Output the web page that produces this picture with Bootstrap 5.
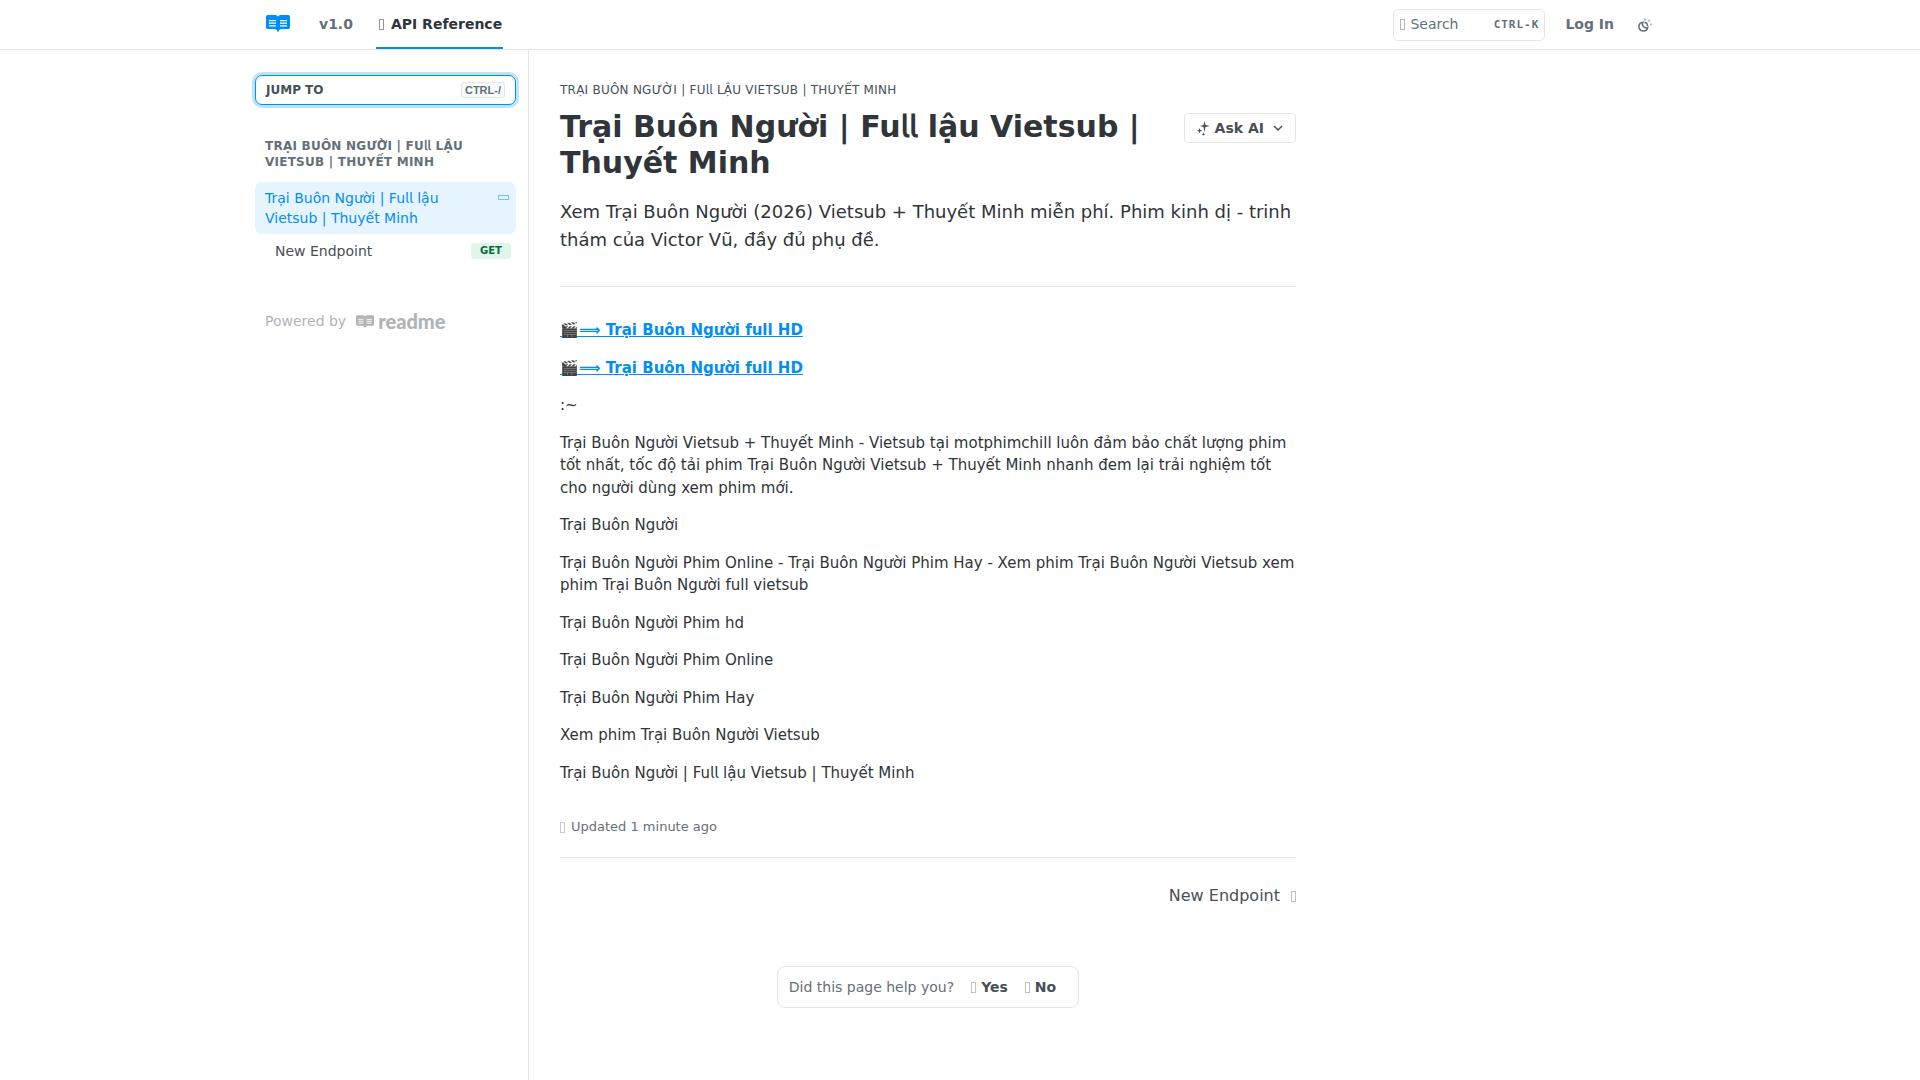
<!DOCTYPE html>
<html lang="vi">
<head>
<meta charset="utf-8">
<meta name="viewport" content="width=device-width, initial-scale=1">
<title>Trại Buôn Người | Fu𝗅𝗅 lậu Vietsub | Thuyết Minh</title>
<link href="https://cdn.jsdelivr.net/npm/bootstrap@5.3.0/dist/css/bootstrap.min.css" rel="stylesheet">
<style>
:root { --rm-blue:#018ef5; --rm-line:#e3e5e7; --rm-muted:#637079; --rm-dark:#465058; --rm-ink:#2f353a; }
body { font-family:"DejaVu Sans", "Noto Sans", sans-serif; font-size:15px; line-height:1.5; color:var(--rm-ink); background:#fff; }
a { text-decoration:none; color:inherit; }
.shell { width:100%; max-width:1410px; margin:0 auto; }
.tofu { display:inline-block; width:5px; height:11px; border:1px solid currentColor; opacity:.5; flex:none; }

.topbar { border-bottom:1px solid var(--rm-line); font-size:14px; }
.topbar .shell { height:49px; }
.brand { padding:0 29px 2px 11px; line-height:0; }
.toplink { font-weight:700; color:var(--rm-muted); }
.tab { gap:7px; margin-left:23px; padding:0 1px 0 3px; color:var(--rm-ink); position:relative; }
.tab::after { content:""; position:absolute; left:0; right:0; bottom:0; height:2px; background:var(--rm-blue); }
.search { width:152px; height:32px; padding:0 5px 0 6px; margin-right:20px; gap:5px; background:#fff; border:1px solid var(--rm-line); border-radius:5px; color:var(--rm-muted); }
.search kbd { padding:0; background:none; color:var(--rm-muted); font:700 11px "DejaVu Sans Mono", monospace; letter-spacing:1px; }
.theme { margin:0 12px 0 23px; padding:0; border:0; background:none; line-height:0; color:var(--rm-muted); }

.rail { width:274px; flex:none; border-right:1px solid var(--rm-line); padding:25px 12px 0 0; min-height:calc(100vh - 50px); }
.jump { width:100%; height:30px; padding:0 10px; background:#fff; border:1px solid var(--rm-blue); border-radius:7px; box-shadow:0 0 0 3px #c0e3fd; font-size:12px; font-weight:700; color:var(--rm-dark); }
.jump kbd { padding:0 3px; background:#f9fafb; border:1px solid var(--rm-line); border-radius:3px; font:700 11px/14px "Liberation Sans", sans-serif; color:var(--rm-muted); }
.group { margin:33px 0 12px; padding:0 10px; font-size:12px; line-height:16px; font-weight:700; letter-spacing:.02em; color:var(--rm-muted); text-transform:uppercase; }
.item { padding:6px 5px 6px 10px; font-size:14px; line-height:20px; color:var(--rm-dark); border-radius:7px; }
.item.on { background:#e6f4fe; color:var(--rm-blue); }
.item.on .tofu { width:11px; height:5px; margin:7px 2px 0 16px; }
.item.sub { padding-left:20px; margin-top:1px; }
.verb { width:40px; line-height:16px; font-size:10px; font-weight:700; text-align:center; background:#dff6e9; color:#046c3c; border-radius:4px; }
.powered { margin-top:44px; padding-left:10px; gap:10px; font-size:14px; line-height:20px; color:#adb4ba; }
.wordmark { font:900 20px/20px Lato, sans-serif; }

.doc { width:767px; padding:28px 0 0 31px; }
.crumb { font-size:12px; line-height:24px; letter-spacing:.02em; color:var(--rm-dark); text-transform:uppercase; }
.doc h1 { margin:7px 0 0; font-size:30px; line-height:36px; font-weight:700; }
.ask { height:30px; margin-top:11px; padding:0 12px; gap:5px; background:#fff; border:1px solid var(--rm-line); border-radius:4px; font-size:14px; font-weight:700; color:var(--rm-dark); }
.intro { margin:17px 0 32px; font-size:18px; line-height:28px; }
.rule { margin:0; border:0; border-top:1px solid var(--rm-line); opacity:1; }
.prose { padding-top:32px; }
.prose p { margin:0 0 15px; }
.prose a { color:var(--rm-blue); text-decoration:underline; font-weight:700; }
.updated { margin:33px 0 20px; gap:6px; font-size:13px; line-height:20px; color:var(--rm-muted); }
.next { margin-top:26px; gap:11px; font-size:16px; line-height:24px; color:var(--rm-dark); }
.helpbox { margin-top:58px; height:42px; padding:0 22px 0 11px; border:1px solid var(--rm-line); border-radius:8px; font-size:14px; color:var(--rm-muted); }
.helpbox button { margin-left:17px; padding:0; border:0; background:none; gap:5px; font-weight:700; color:var(--rm-dark); }
.tofu.faint { opacity:.35; }
</style>
</head>
<body>
<svg class="d-none">
  <symbol id="book" viewBox="0 0 24 17">
    <path fill="currentColor" d="M1.500 0H8.500C10.300 0 11.500.6 12 1.700C12.500.6 13.700 0 15.500 0H22.500Q24 0 24 1.500V12.500Q24 14 22.500 14H16C14 14 13.300 14.800 12.700 16.200Q12 17.600 11.300 16.200C10.700 14.800 10 14 8 14H1.500Q0 14 0 12.500V1.500Q0 0 1.500 0Z"/>
    <path stroke="#fff" stroke-width="1.200" d="M3 5.600H10M3 8.200H10M3 10.800H10M14 5.600H21M14 8.200H21M14 10.800H21"/>
  </symbol>
</svg>
<header class="topbar">
  <div class="shell d-flex align-items-center">
    <a class="brand" href="#" aria-label="Home"><svg width="24" height="17" color="#018ef5"><use href="#book"/></svg></a>
    <a class="toplink" href="#">v1.0</a>
    <a class="toplink tab d-flex align-items-center align-self-stretch" href="#"><i class="tofu"></i>API Reference</a>
    <button class="search d-flex align-items-center ms-auto" type="button"><i class="tofu"></i><span>Search</span><kbd class="ms-auto">CTRL-K</kbd></button>
    <a class="toplink" href="#">Log In</a>
    <button class="theme" type="button" aria-label="Theme"><svg width="16" height="16" viewBox="0 0 16 16" fill="none" stroke="currentColor"><path stroke-width="1.500" d="M6 5.200A4.400 4.400 0 1 0 10.700 10.300A3.600 3.600 0 0 1 6 5.200Z"/><path stroke-width="2" opacity=".5" d="M8 1.500V3.500M12.800 3L11.500 4.500M13 7.500H15"/><path stroke-width="1.500" d="M7.500 5.500Q10.500 5.500 10.500 9"/></svg></button>
  </div>
</header>
<div class="shell d-flex">
  <nav class="rail">
    <button class="jump d-flex align-items-center justify-content-between" type="button">JUMP TO <kbd>CTRL-/</kbd></button>
    <h2 class="group">Trại Buôn Người | Fu𝗅𝗅 lậu Vietsub | Thuyết Minh</h2>
    <a class="item on d-flex justify-content-between" href="#"><span>Trại Buôn Người | Fu𝗅𝗅 lậu Vietsub | Thuyết Minh</span><i class="tofu"></i></a>
    <a class="item sub d-flex align-items-center justify-content-between" href="#">New Endpoint <span class="verb">GET</span></a>
    <a class="powered d-flex align-items-center" href="#">Powered by <span class="d-flex align-items-center gap-1"><svg width="18" height="13"><use href="#book"/></svg><span class="wordmark">readme</span></span></a>
  </nav>
  <main class="doc">
    <header>
      <div class="crumb">Trại Buôn Người | Fu𝗅𝗅 lậu Vietsub | Thuyết Minh</div>
      <div class="d-flex align-items-start justify-content-between">
        <h1>Trại Buôn Người | Fu𝗅𝗅 lậu Vietsub | Thuyết Minh</h1>
        <button class="ask d-flex align-items-center flex-shrink-0" type="button">
          <svg width="13" height="16" viewBox="0 0 13 16" fill="currentColor"><path d="M7.500 1L8.500 5L13 6L8.500 7L7.500 12L6.500 7L3 6L6.500 5ZM2.500 8L3.200 10L5.200 10.800L3.200 11.500L2.500 13.500L1.800 11.500L0 10.800L1.800 10ZM6.500 12.200L7 13.700L8.500 14.200L7 14.800L6.500 16L6 14.800L4.700 14.200L6 13.700Z"/></svg>
          Ask AI
          <svg class="ms-1" width="10" height="10" viewBox="0 0 10 10" fill="none" stroke="currentColor" stroke-width="1.500"><path d="M1 3L5 7L9 3"/></svg>
        </button>
      </div>
      <p class="intro">Xem Trại Buôn Người (2026) Vietsub + Thuyết Minh miễn phí. Phim kinh dị - trinh thám của Victor Vũ, đầy đủ phụ đề.</p>
    </header>
    <hr class="rule">
    <article class="prose">
      <p><a href="#">🎬⟹ Trại Buôn Người full HD</a></p>
      <p><a href="#">🎬⟹ Trại Buôn Người full HD</a></p>
      <p>:~</p>
      <p>Trại Buôn Người Vietsub + Thuyết Minh - Vietsub tại motphimchill luôn đảm bảo chất lượng phim tốt nhất, tốc độ tải phim Trại Buôn Người Vietsub + Thuyết Minh nhanh đem lại trải nghiệm tốt cho người dùng xem phim mới.</p>
      <p>Trại Buôn Người</p>
      <p>Trại Buôn Người Phim Online - Trại Buôn Người Phim Hay - Xem phim Trại Buôn Người Vietsub xem phim Trại Buôn Người full vietsub</p>
      <p>Trại Buôn Người Phim hd</p>
      <p>Trại Buôn Người Phim Online</p>
      <p>Trại Buôn Người Phim Hay</p>
      <p>Xem phim Trại Buôn Người Vietsub</p>
      <p>Trại Buôn Người | Fu𝗅𝗅 lậu Vietsub | Thuyết Minh</p>
    </article>
    <div class="updated d-flex align-items-center"><i class="tofu faint"></i>Updated 1 minute ago</div>
    <hr class="rule">
    <div class="d-flex justify-content-end"><a class="next d-flex align-items-center" href="#">New Endpoint <i class="tofu faint"></i></a></div>
    <div class="d-flex justify-content-center">
      <div class="helpbox d-flex align-items-center">Did this page help you?
        <button class="d-flex align-items-center" type="button"><i class="tofu faint"></i>Yes</button>
        <button class="d-flex align-items-center" type="button"><i class="tofu faint"></i>No</button>
      </div>
    </div>
  </main>
</div>
<script src="https://cdn.jsdelivr.net/npm/bootstrap@5.3.0/dist/js/bootstrap.bundle.min.js"></script>
</body>
</html>
